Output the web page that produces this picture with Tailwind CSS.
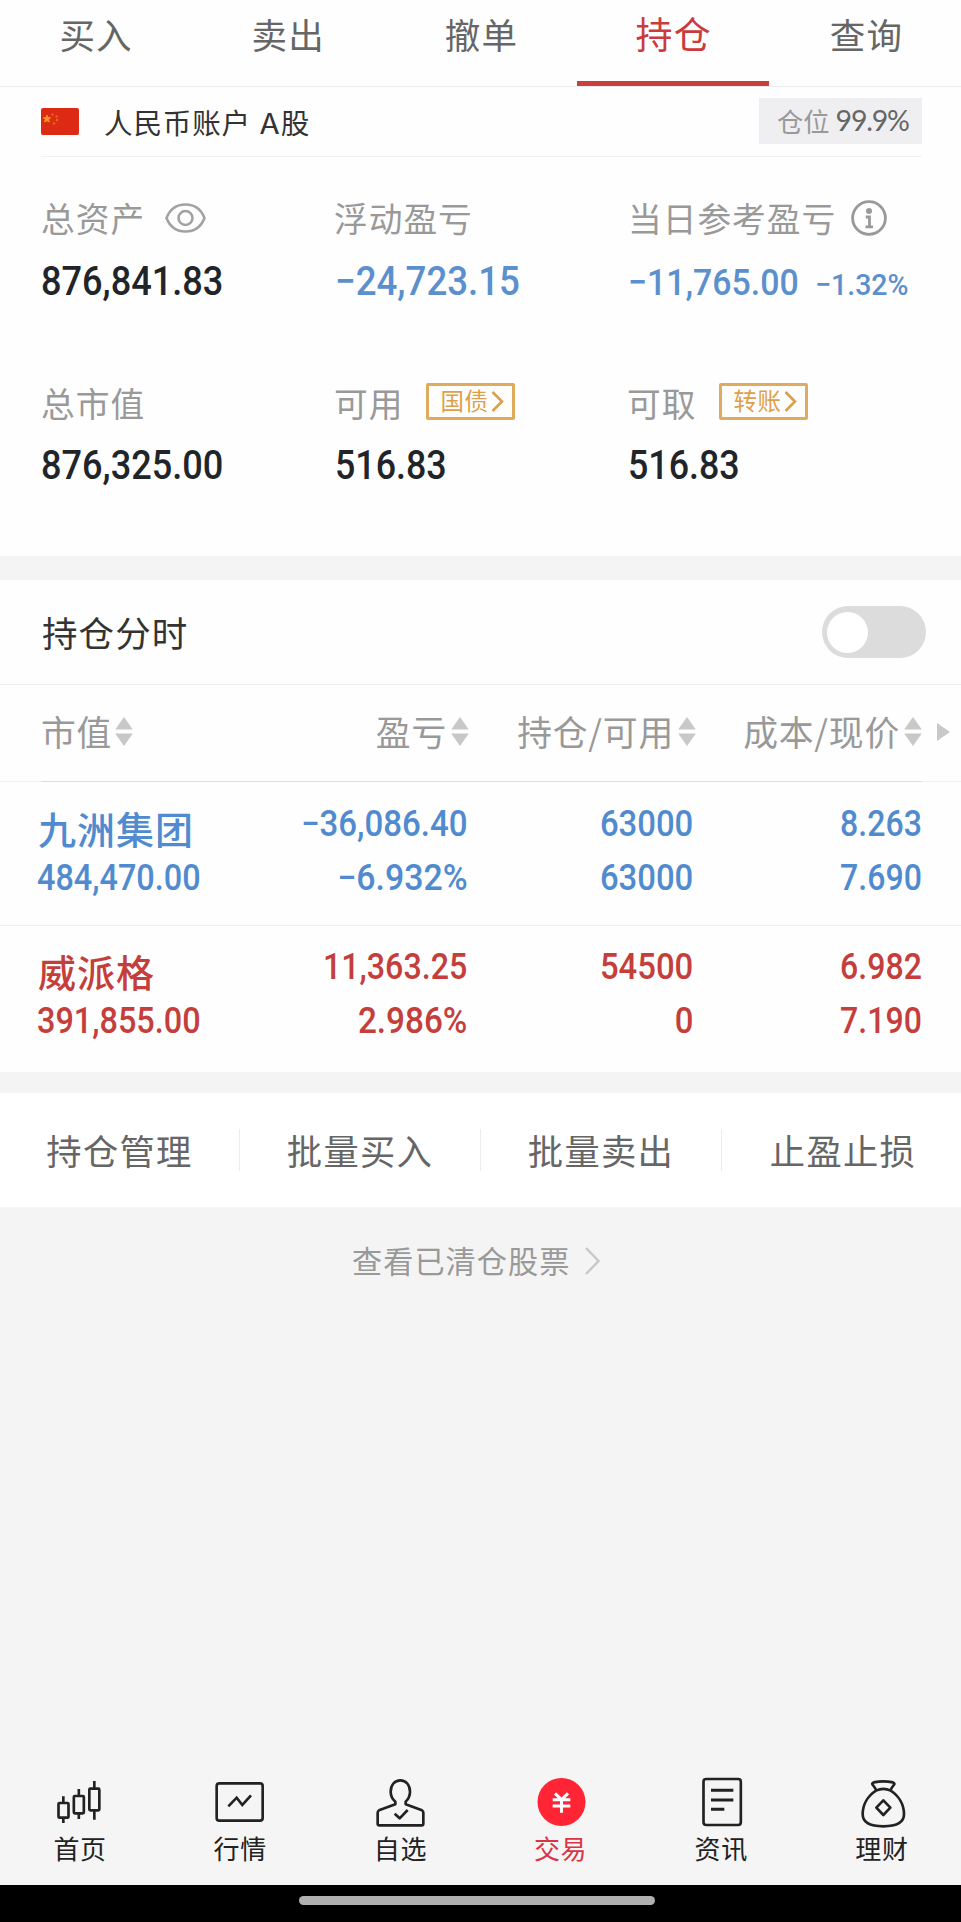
<!DOCTYPE html>
<html lang="zh-CN">
<head>
<meta charset="utf-8">
<title>持仓</title>
<script src="https://cdn.jsdelivr.net/npm/@tailwindcss/browser@4"></script>
</head>
<body class="bg-[#f4f4f4]">
<div class="flex h-[1922px] w-[961px] flex-col overflow-hidden bg-[#f4f4f4] font-['Noto_Sans_CJK_SC',sans-serif] leading-none whitespace-nowrap">

  <!-- tabs -->
  <nav class="grid h-[87px] shrink-0 grid-cols-5 border-b border-[#ebebeb] bg-[#fefefe] text-center text-[35.5px] tracking-[1.2px] text-[#666]">
    <div class="pt-[16px]">买入</div>
    <div class="pt-[16px]">卖出</div>
    <div class="pt-[16px] pl-[2px]">撤单</div>
    <div class="border-b-[5px] border-[#c93f3f] pt-[15px] pl-[2px] text-[37px] text-[#cc3b3b]">持仓</div>
    <div class="pt-[16px] pl-[3px]">查询</div>
  </nav>

  <section class="h-[469px] shrink-0 bg-[#fefefe] pr-[39px] pl-[41px]">
    <!-- account -->
    <div class="flex h-[70px] items-center border-b border-[#f1f1f1]">
      <svg class="h-[27px] w-[38px]" viewBox="0 0 38 27">
        <rect width="38" height="27" rx="2" fill="#dc2a15"/>
        <path d="M6 7.200l1 2.400 2.600.2-2 1.700.7 2.500L6 12.600l-2.300 1.400.7-2.500-2-1.700 2.600-.2z" fill="#fa9a1e" stroke="#fa9a1e"/>
        <g fill="#f0641e"><circle cx="11.500" cy="6.500" r="1.200"/><circle cx="15.500" cy="8.500" r="1.200"/><circle cx="16" cy="12" r="1.200"/><circle cx="13" cy="15.500" r="1.200"/></g>
      </svg>
      <span class="ml-[25px] pt-px text-[28.600px] tracking-[.8px] text-[#333]">人民币账户 <span class="ml-[2px] inline-block w-[20.500px] origin-left scale-x-110">A</span>股</span>
      <div class="mb-px ml-auto flex h-[46px] w-[163px] items-center bg-[#efeff1] pl-[18px]">
        <span class="text-[26.300px] text-[#999]">仓位</span>
        <span class="mb-[2px] ml-[6px] font-[Lato] text-[28.500px] tracking-[-1.200px] text-[#666]">99.9%</span>
      </div>
    </div>

    <!-- totals -->
    <div class="grid grid-cols-[293px_293px_1fr] pt-[36px] text-[33.700px] tracking-[1px] text-[#999]">
      <div>
        <div class="flex h-[50px] items-center">总资产
          <svg class="ml-[20px] h-[30px] w-[41px]" viewBox="0 0 41 30" fill="none" stroke="#a2a2a2" stroke-width="2.600"><path d="M1.500 15C5 6 12 1.500 20.500 1.500S36 6 39.500 15C36 24 29 28.500 20.500 28.500S5 24 1.500 15z"/><circle cx="20.500" cy="15" r="7"/></svg>
        </div>
        <div class="mt-[14px] flex h-[50px] items-center font-[Roboto] text-[40px] font-medium tracking-normal text-[#212529]"><span class="origin-left scale-x-[.903]">876,841.83</span></div>
      </div>
      <div>
        <div class="flex h-[50px] items-center">浮动盈亏</div>
        <div class="mt-[14px] flex h-[50px] items-center pl-px font-[Roboto] text-[40px] font-medium tracking-normal text-[#5b90cd]"><span class="origin-left scale-x-[.917]">−24,723.15</span></div>
      </div>
      <div>
        <div class="flex h-[50px] items-center pl-px">当日参考盈亏
          <svg class="ml-[15px] size-[36px]" viewBox="0 0 36 36" fill="none" stroke="#999" stroke-width="2.800"><circle cx="18" cy="18" r="16.400"/><circle cx="18" cy="11" r="3" fill="#999" stroke="none"/><path d="M14.800 17h3.700v9.500M14.500 26.800h7.500"/></svg>
        </div>
        <div class="mt-[14px] flex h-[50px] items-baseline pt-[7px] pl-px font-[Roboto] font-medium tracking-normal text-[#5b90cd]"><span class="w-[187px] text-[37px]"><span class="inline-block origin-left scale-x-[.915]">−11,765.00</span></span><span class="text-[30px]"><span class="inline-block origin-left scale-x-[.95]">−1.32%</span></span></div>
      </div>
    </div>
    <div class="mt-[71px] grid grid-cols-[293px_293px_1fr] text-[33.700px] tracking-[1px] text-[#999]">
      <div>
        <div class="flex h-[50px] items-center">总市值</div>
        <div class="mt-[13px] flex h-[50px] items-center font-[Roboto] text-[40px] font-medium tracking-normal text-[#212529]"><span class="origin-left scale-x-[.903]">876,325.00</span></div>
      </div>
      <div>
        <div class="flex h-[50px] items-center">可用
          <span class="mb-[4px] ml-[23px] flex h-[37px] w-[89px] items-center rounded-[2px] border-[3px] border-[#deac5c] pl-[11px] text-[23.500px] tracking-[.5px] text-[#dda04a]">国债<svg class="ml-[3px] h-[21px] w-[13px]" viewBox="0 0 13 21" fill="none" stroke="#dda04a" stroke-width="2.600"><path d="M1.500 1l9.500 9.500L1.500 20"/></svg></span>
        </div>
        <div class="mt-[13px] flex h-[50px] items-center pl-px font-[Roboto] text-[40px] font-medium tracking-normal text-[#212529]"><span class="origin-left scale-x-[.895]">516.83</span></div>
      </div>
      <div>
        <div class="flex h-[50px] items-center">可取
          <span class="mb-[4px] ml-[23px] flex h-[37px] w-[89px] items-center rounded-[2px] border-[3px] border-[#deac5c] pl-[11px] text-[23.500px] tracking-[.5px] text-[#dda04a]">转账<svg class="ml-[3px] h-[21px] w-[13px]" viewBox="0 0 13 21" fill="none" stroke="#dda04a" stroke-width="2.600"><path d="M1.500 1l9.500 9.500L1.500 20"/></svg></span>
        </div>
        <div class="mt-[13px] flex h-[50px] items-center pl-px font-[Roboto] text-[40px] font-medium tracking-normal text-[#212529]"><span class="origin-left scale-x-[.895]">516.83</span></div>
      </div>
    </div>
  </section>

  <!-- intraday toggle -->
  <section class="mt-[24px] flex h-[105px] shrink-0 items-center justify-between border-b border-[#ececec] bg-[#fefefe] pr-[35px] pl-[42px]">
    <span class="text-[35.500px] tracking-[1.100px] text-[#333]">持仓分时</span>
    <div class="flex h-[52px] w-[104px] items-center rounded-full bg-[#dcdcdc] pl-[5px]"><div class="size-[41px] rounded-full bg-white"></div></div>
  </section>

  <!-- holdings -->
  <section class="h-[387px] shrink-0 bg-[#fefefe]">
    <div class="grid h-[96px] grid-cols-[41px_200px_228px_227px_226px_1fr] items-center pb-[3px] text-[34.800px] tracking-[.8px] text-[#999]">
      <div></div>
      <div class="flex items-center">市值<svg class="ml-[3px] h-[29px] w-[18px]" viewBox="0 0 18 29" fill="#c8c8c8"><path d="M9 0l8.800 12.500H.2zM9 29l8.800-12.500H.2z"/></svg></div>
      <div class="flex items-center justify-end">盈亏<svg class="ml-[4px] h-[29px] w-[18px]" viewBox="0 0 18 29" fill="#c8c8c8"><path d="M9 0l8.800 12.500H.2zM9 29l8.800-12.500H.2z"/></svg></div>
      <div class="flex items-center justify-end">持仓/可用<svg class="ml-[4px] h-[29px] w-[18px]" viewBox="0 0 18 29" fill="#c8c8c8"><path d="M9 0l8.800 12.500H.2zM9 29l8.800-12.500H.2z"/></svg></div>
      <div class="flex items-center justify-end">成本/现价<svg class="ml-[4px] h-[29px] w-[18px]" viewBox="0 0 18 29" fill="#c8c8c8"><path d="M9 0l8.800 12.500H.2zM9 29l8.800-12.500H.2z"/></svg></div>
      <svg class="ml-[15px] h-[18px] w-[13px]" viewBox="0 0 13 18" fill="#c8c8c8"><path d="M0 0l13 9L0 18z"/></svg>
    </div>
    <div class="h-px bg-[#f3f3f3] pr-[39px] pl-[41px]"><div class="h-px bg-[#dedede]"></div></div>

    <div class="grid h-[144px] grid-cols-[200px_230.5px_226px_228px] border-b border-[#f0f0f0] pt-[14px] pl-[37px] font-[Roboto] text-[36px] font-medium text-[#508bcf]">
      <div>
        <div class="flex h-[64px] items-center pl-px font-['Noto_Sans_CJK_SC'] text-[38px] tracking-[1px]">九洲集团</div>
        <div class="flex h-[36px] items-center"><span class="origin-left scale-x-[.9]">484,470.00</span></div>
      </div>
      <div class="flex flex-col items-end gap-[18px] pt-[10px]"><span class="origin-right scale-x-[.918]">−36,086.40</span><span class="origin-right scale-x-[.94]">−6.932%</span></div>
      <div class="flex flex-col items-end gap-[18px] pt-[10px]"><span class="origin-right scale-x-[.913]">63000</span><span class="origin-right scale-x-[.913]">63000</span></div>
      <div class="flex flex-col items-end gap-[18px] pt-[10px]"><span class="origin-right scale-x-[.89]">8.263</span><span class="origin-right scale-x-[.89]">7.690</span></div>
    </div>
    <div class="grid h-[144px] grid-cols-[200px_230.5px_226px_228px] pt-[14px] pl-[37px] font-[Roboto] text-[36px] font-medium text-[#c43e3b]">
      <div>
        <div class="flex h-[62px] items-center pl-px font-['Noto_Sans_CJK_SC'] text-[38px] tracking-[1px]">威派格</div>
        <div class="mt-px flex h-[36px] items-center"><span class="origin-left scale-x-[.9]">391,855.00</span></div>
      </div>
      <div class="flex flex-col items-end gap-[18px] pt-[9px]"><span class="origin-right scale-x-[.895]">11,363.25</span><span class="origin-right scale-x-[.925]">2.986%</span></div>
      <div class="flex flex-col items-end gap-[18px] pt-[9px]"><span class="origin-right scale-x-[.913]">54500</span><span class="origin-right scale-x-[.913]">0</span></div>
      <div class="flex flex-col items-end gap-[18px] pt-[9px]"><span class="origin-right scale-x-[.89]">6.982</span><span class="origin-right scale-x-[.89]">7.190</span></div>
    </div>
  </section>

  <!-- batch actions -->
  <section class="mt-[21px] grid h-[114px] shrink-0 grid-cols-[240px_241px_241px_239px] items-center bg-white pb-px text-[35.300px] tracking-[1.300px] text-[#666]">
    <div class="flex h-[42px] items-center justify-center border-r border-[#ececec]">持仓管理</div>
    <div class="flex h-[42px] items-center justify-center border-r border-[#ececec]">批量买入</div>
    <div class="flex h-[42px] items-center justify-center border-r border-[#ececec]">批量卖出</div>
    <div class="flex h-[42px] items-center justify-center pl-[3px]">止盈止损</div>
  </section>

  <div class="flex h-[108px] shrink-0 items-center pb-[2px] pl-[352px] text-[30.200px] tracking-[1px] text-[#999]">查看已清仓股票<svg class="mt-px ml-[15px] h-[28px] w-[15px]" viewBox="0 0 15 28" fill="none" stroke="#c8c8c8" stroke-width="2.400"><path d="M1 1l12.500 13L1 27"/></svg></div>

  <!-- bottom bar -->
  <nav class="mt-auto grid h-[125px] shrink-0 grid-cols-6 bg-[#f5f5f5] text-[26px] tracking-[.7px] text-[#222]">
    <div class="flex flex-col items-center pt-[14px]">
      <svg class="h-[57px] w-[60px]" viewBox="151 70 180 171" fill="none" stroke="#222" stroke-width="8"><rect x="176.500" y="157" width="30" height="44" rx="3"/><path d="M191 137v20M191 201v16"/><rect x="222.500" y="136" width="30" height="52" rx="3"/><path d="M237.500 115v21M237.500 188v17"/><rect x="269" y="114" width="30" height="65" rx="3"/><path d="M284 91v23M284 179v28"/></svg>
      <span class="mt-[4px]">首页</span>
    </div>
    <div class="flex flex-col items-center pt-[14px]">
      <svg class="h-[57px] w-[60px]" viewBox="631 70 180 171" fill="none" stroke="#222" stroke-width="8"><rect x="651" y="98" width="138" height="112" rx="8"/><path d="M686 167l25-26 17 22 26-29"/></svg>
      <span class="mt-[4px]">行情</span>
    </div>
    <div class="flex flex-col items-center pt-[14px]">
      <svg class="h-[57px] w-[60px]" viewBox="1111 70 180 171" fill="none" stroke="#222" stroke-width="8" stroke-linejoin="round"><path d="M1187 153c-9-8-14-17-14-30 0-20 12-34 29-34s29 14 29 34c0 13-5 22-13 30v8l49 18q4 2 4 7v33q0 5-5 5h-127q-5 0-5-5v-33q0-5 4-7l49-18z"/><path d="M1185 189l15 14 24-25"/></svg>
      <span class="mt-[4px]">自选</span>
    </div>
    <div class="flex flex-col items-center pt-[14px] text-[#d93545]">
      <svg class="h-[57px] w-[60px]" viewBox="152 70 180 171" fill="none" stroke="#fff" stroke-width="9"><circle cx="243.500" cy="154" r="72" fill="#ff2535" stroke="none"/><path d="M224 128l19.500 19 19.500-19M243.500 148v38M217 147h53M217 166h53"/></svg>
      <span class="mt-[4px]">交易</span>
    </div>
    <div class="flex flex-col items-center pt-[14px] pl-px">
      <svg class="h-[57px] w-[60px]" viewBox="632 70 180 171" fill="none" stroke="#222" stroke-width="8"><rect x="669.500" y="85" width="112" height="138" rx="8"/><path d="M692 119h67M692 148h67M692 176h40" stroke-width="9"/></svg>
      <span class="mt-[4px]">资讯</span>
    </div>
    <div class="flex flex-col items-center pt-[14px] pl-[2px]">
      <svg class="h-[57px] w-[60px]" viewBox="1114 70 180 171" fill="none" stroke="#222" stroke-width="8" stroke-linejoin="round"><path d="M1187 120c-3-9-8-13-12-19-3-6 14-9 33-9s36 3 33 9c-4 6-9 10-12 19"/><path d="M1186 120q22-11 44 0c25 16 40 43 40 71 0 26-22 36-62 36s-62-10-62-36c0-28 15-55 40-71z"/><path d="M1208 149l21 22-21 22-21-22z"/></svg>
      <span class="mt-[4px]">理财</span>
    </div>
  </nav>
  <div class="flex h-[37px] shrink-0 justify-center bg-black pt-[11px] pr-[7px]"><div class="h-[9px] w-[356px] rounded-full bg-[#b0b0b0]"></div></div>
</div>
</body>
</html>
